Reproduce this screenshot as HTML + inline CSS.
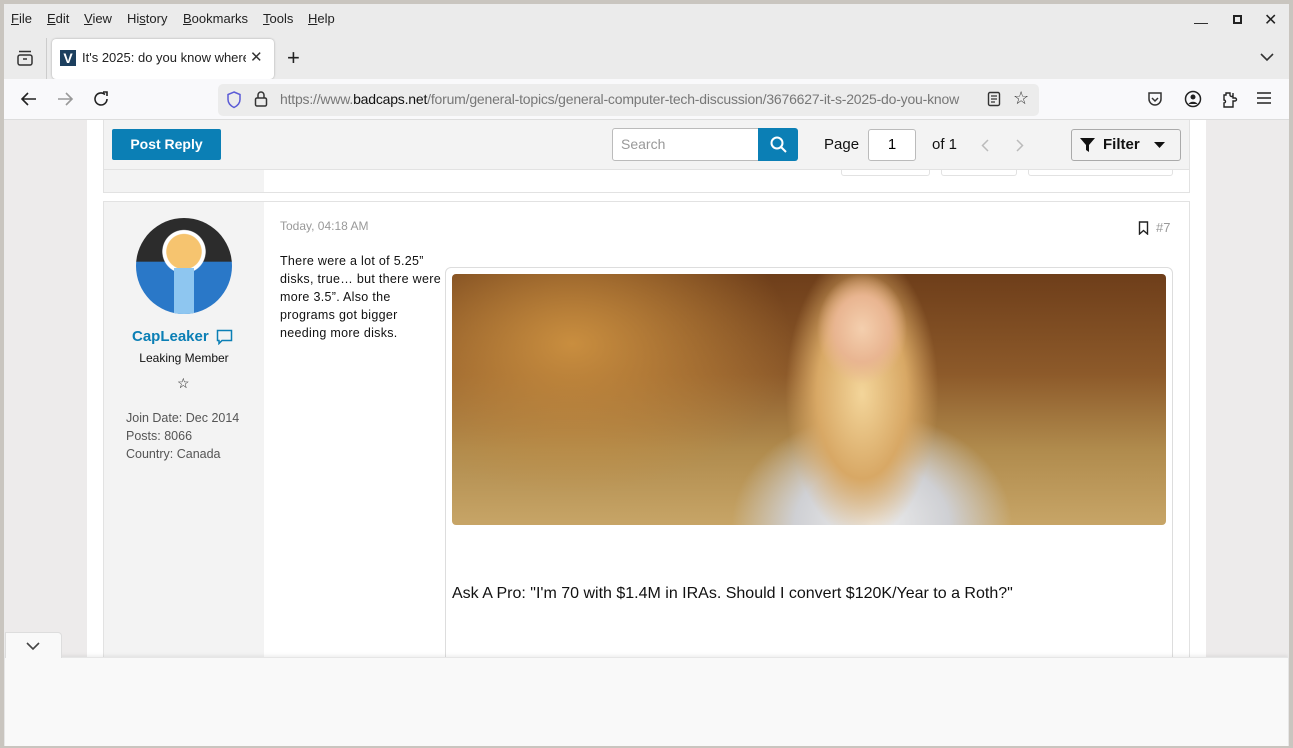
<!DOCTYPE html><html><head><style>
*{box-sizing:border-box;margin:0;padding:0}
body{width:1293px;height:748px;overflow:hidden;background:#c9c5bf;font-family:"Liberation Sans",sans-serif;position:relative}
.win{position:absolute;left:4px;top:4px;width:1285px;height:742px;background:#ebebeb;overflow:hidden}
.abs{position:absolute}
.menu span{position:absolute;top:7px;font-size:13px;color:#222}
</style></head><body>
<div class="win">
 <div class="menu">
  <span style="left:7px"><u>F</u>ile</span><span style="left:43px"><u>E</u>dit</span><span style="left:80px"><u>V</u>iew</span><span style="left:123px">Hi<u>s</u>tory</span><span style="left:179px"><u>B</u>ookmarks</span><span style="left:259px"><u>T</u>ools</span><span style="left:304px"><u>H</u>elp</span>
 </div>
 <div class="abs" style="left:1190px;top:10px;font-size:14px;color:#222">&#8212;</div>
 <div class="abs" style="left:1229px;top:11px;width:9px;height:9px;border:2px solid #222"></div>
 <div class="abs" style="left:1260px;top:6px;font-size:16px;color:#222">✕</div>
 <svg class="abs" style="left:12px;top:45px" width="18" height="18"><rect x="2" y="6" width="14" height="10" rx="2" fill="none" stroke="#333" stroke-width="1.5"/><line x1="3" y1="2.5" x2="15" y2="2.5" stroke="#333" stroke-width="1.5"/><line x1="7" y1="10" x2="11" y2="10" stroke="#333" stroke-width="1.5"/></svg>
 <div class="abs" style="left:42px;top:34px;width:1px;height:42px;background:#ccc"></div>
 <div class="abs" style="left:48px;top:35px;width:222px;height:40px;background:#fff;border-radius:4px;box-shadow:0 0 2px rgba(0,0,0,.3)"></div>
 <div class="abs" style="left:56px;top:46px;width:16px;height:16px;background:#1c3f5e;color:#fff;font-size:14px;font-weight:bold;line-height:16px;text-align:center">V</div>
 <div class="abs" style="left:78px;top:46px;font-size:13px;color:#222;width:164px;overflow:hidden;white-space:nowrap">It's 2025: do you know where</div>
 <div class="abs" style="left:246px;top:44px;font-size:15px;color:#333">✕</div>
 <div class="abs" style="left:283px;top:41px;font-size:22px;color:#222">+</div>
 <svg class="abs" style="left:1256px;top:48px" width="14" height="10"><path d="M1 2l6 6 6-6" fill="none" stroke="#333" stroke-width="1.6"/></svg>
 <div class="abs" style="left:0;top:75px;width:1285px;height:41px;background:#f9f9fb;border-bottom:1px solid #ddd"></div>
 <svg class="abs" style="left:16px;top:87px" width="18" height="16"><path d="M16 8H2M8 2L2 8l6 6" fill="none" stroke="#222" stroke-width="1.6"/></svg>
 <svg class="abs" style="left:52px;top:87px" width="18" height="16"><path d="M2 8h14M10 2l6 6-6 6" fill="none" stroke="#999" stroke-width="1.6"/></svg>
 <svg class="abs" style="left:89px;top:86px" width="18" height="18"><path d="M14 9a6 6 0 1 1-2-4.5" fill="none" stroke="#222" stroke-width="1.6"/><path d="M10 2h4v4" fill="none" stroke="#222" stroke-width="1.6"/></svg>
 <div class="abs" style="left:214px;top:80px;width:821px;height:32px;background:#ececec;border-radius:5px"></div>
 <svg class="abs" style="left:222px;top:87px" width="16" height="18"><path d="M8 1l6 2.5v5c0 4-3 6.5-6 8-3-1.5-6-4-6-8v-5z" fill="none" stroke="#5b5bd6" stroke-width="1.5"/></svg>
 <svg class="abs" style="left:250px;top:86px" width="14" height="18"><rect x="1.5" y="8" width="11" height="8" rx="1.5" fill="none" stroke="#333" stroke-width="1.5"/><path d="M4 8V5a3 3 0 0 1 6 0v3" fill="none" stroke="#333" stroke-width="1.5"/></svg>
 <div class="abs" style="left:276px;top:87px;font-size:14px;color:#777;width:700px;overflow:hidden;white-space:nowrap;letter-spacing:-0.2px">https://www.<span style="color:#111">badcaps.net</span>/forum/general-topics/general-computer-tech-discussion/3676627-it-s-2025-do-you-know</div>
 <svg class="abs" style="left:983px;top:87px" width="14" height="16"><rect x="1.5" y="1.5" width="11" height="13" rx="1.5" fill="none" stroke="#333" stroke-width="1.4"/><path d="M4 5h6M4 8h6M4 11h4" stroke="#333" stroke-width="1.2"/></svg>
 <div class="abs" style="left:1009px;top:84px;font-size:18px;color:#333">☆</div>
 <svg class="abs" style="left:1143px;top:87px" width="16" height="16"><path d="M2 2h12v6a6 6 0 0 1-12 0z" fill="none" stroke="#333" stroke-width="1.5"/><path d="M5 7l3 3 3-3" fill="none" stroke="#333" stroke-width="1.5"/></svg>
 <svg class="abs" style="left:1180px;top:86px" width="18" height="18"><circle cx="9" cy="9" r="7.5" fill="none" stroke="#222" stroke-width="1.5"/><circle cx="9" cy="7" r="2.5" fill="#222"/><path d="M4.5 14a5 4 0 0 1 9 0" fill="#222"/></svg>
 <svg class="abs" style="left:1216px;top:86px" width="18" height="18"><path d="M6 3h4v2a1.5 1.5 0 0 0 3 0V3h0v5h2a1.5 1.5 0 0 1 0 3h-2v6H4v-4a1.5 1.5 0 0 0 0-3V5h2z" fill="none" stroke="#222" stroke-width="1.4"/></svg>
 <svg class="abs" style="left:1253px;top:88px" width="14" height="12"><path d="M0 1h14M0 6h14M0 11h14" stroke="#222" stroke-width="1.5"/></svg>
 <div class="abs" style="left:1px;top:116px;width:1283px;height:537px;background:#edebeb;overflow:hidden">
  <div class="abs" style="left:82px;top:0;width:1119px;height:537px;background:#fff"></div>
  <div class="abs" style="left:98px;top:0;width:1087px;height:73px;border:1px solid #e2e2e2;border-top:none;background:#fff"></div>
  <div class="abs" style="left:99px;top:49px;width:160px;height:23px;background:#f3f3f3"></div>
  <div class="abs" style="left:99px;top:0;width:1085px;height:50px;background:#f3f3f3;border-bottom:1px solid #e2e2e2"></div>
  <div class="abs" style="left:836px;top:50px;width:89px;height:6px;border:1px solid #e2e2e2;border-top:none;border-radius:0 0 3px 3px"></div>
  <div class="abs" style="left:936px;top:50px;width:76px;height:6px;border:1px solid #e2e2e2;border-top:none;border-radius:0 0 3px 3px"></div>
  <div class="abs" style="left:1023px;top:50px;width:145px;height:6px;border:1px solid #e2e2e2;border-top:none;border-radius:0 0 3px 3px"></div>
  <div class="abs" style="left:107px;top:9px;width:109px;height:31px;background:#0b7fb5;border-radius:2px;color:#fff;font-weight:bold;font-size:14px;line-height:31px;text-align:center">Post Reply</div>
  <div class="abs" style="left:607px;top:8px;width:147px;height:33px;border:1px solid #bbb;border-radius:3px 0 0 3px;background:#fff;color:#999;font-size:14px;line-height:31px;padding-left:8px">Search</div>
  <div class="abs" style="left:753px;top:8px;width:40px;height:33px;background:#0b7fb5;border-radius:0 3px 3px 0"></div>
  <svg class="abs" style="left:765px;top:16px" width="17" height="17"><circle cx="7" cy="7" r="5.5" fill="none" stroke="#fff" stroke-width="2"/><path d="M11 11l5 5" stroke="#fff" stroke-width="2"/></svg>
  <div class="abs" style="left:819px;top:16px;font-size:15px;color:#111">Page</div>
  <div class="abs" style="left:863px;top:9px;width:48px;height:32px;border:1px solid #bbb;border-radius:3px;background:#fff;text-align:center;line-height:30px;font-size:15px">1</div>
  <div class="abs" style="left:927px;top:16px;font-size:15px;color:#111">of 1</div>
  <svg class="abs" style="left:976px;top:19px" width="8" height="13"><path d="M7 1L1.5 6.5 7 12" fill="none" stroke="#bbb" stroke-width="1.5"/></svg>
  <svg class="abs" style="left:1011px;top:19px" width="8" height="13"><path d="M1 1l5.5 5.5L1 12" fill="none" stroke="#bbb" stroke-width="1.5"/></svg>
  <div class="abs" style="left:1066px;top:9px;width:110px;height:32px;border:1px solid #aaa;border-radius:3px;background:#f3f3f3"></div>
  <svg class="abs" style="left:1075px;top:18px" width="15" height="14"><path d="M0 0h15L9 7v7L6 12V7z" fill="#111"/></svg>
  <div class="abs" style="left:1098px;top:16px;font-size:15px;font-weight:bold;color:#111">Filter</div>
  <svg class="abs" style="left:1149px;top:22px" width="11" height="6"><path d="M0 0h11L5.5 6z" fill="#111"/></svg>
  <div class="abs" style="left:98px;top:81px;width:1087px;height:470px;border:1px solid #e2e2e2"></div>
  <div class="abs" style="left:99px;top:82px;width:160px;height:460px;background:#f3f3f3"></div>
  <div class="abs" style="left:131px;top:98px;width:96px;height:96px;border-radius:50%;background:radial-gradient(circle at 50% 35%,#f6c46f 0 22%,#fff 23% 27%,transparent 28%),linear-gradient(#2c2c2c 45%,#2a78c8 46%);overflow:hidden"><div style="position:absolute;left:38px;top:50px;width:20px;height:46px;background:#8ec6f0"></div></div>
  <div class="abs" style="left:127px;top:208px;font-size:15px;font-weight:bold;color:#0b7fb5">CapLeaker</div>
  <svg class="abs" style="left:211px;top:209px" width="17" height="16"><path d="M1.5 1.5h14v10H6l-3 3v-3H1.5z" fill="none" stroke="#0b7fb5" stroke-width="1.5"/></svg>
  <div class="abs" style="left:99px;top:231px;width:160px;text-align:center;font-size:12px;color:#111">Leaking Member</div>
  <div class="abs" style="left:172px;top:255px;font-size:14px;color:#111">☆</div>
  <div class="abs" style="left:121px;top:289px;font-size:12.5px;color:#555;line-height:18px">Join Date: Dec 2014<br>Posts: 8066<br>Country: Canada</div>
  <div class="abs" style="left:275px;top:99px;font-size:12px;color:#999">Today, 04:18 AM</div>
  <svg class="abs" style="left:1133px;top:101px" width="11" height="14"><path d="M1.5 1h8v12L5.5 9.5 1.5 13z" fill="none" stroke="#222" stroke-width="1.4"/></svg>
  <div class="abs" style="left:1151px;top:100px;font-size:13px;color:#999">#7</div>
  <div class="abs" style="left:275px;top:132px;font-size:12.5px;letter-spacing:0.3px;color:#111;line-height:18px;width:164px">There were a lot of 5.25” disks, true… but there were more 3.5”. Also the programs got bigger needing more disks.</div>
  <div class="abs" style="left:440px;top:147px;width:728px;height:420px;border:1px solid #ddd;border-radius:6px"></div>
  <div class="abs" style="left:447px;top:154px;width:714px;height:251px;border-radius:4px;background:
   radial-gradient(ellipse 45px 55px at 410px 55px,#f4cfae 0,#e9b591 60%,transparent 100%),
   radial-gradient(ellipse 90px 170px at 410px 120px,#f3d59a 0,#d8a865 50%,transparent 85%),
   radial-gradient(ellipse 140px 110px at 420px 250px,#eeeeee 0,#cfd0d4 55%,transparent 100%),
   radial-gradient(ellipse 220px 150px at 120px 70px,#c98e3f,transparent),
   linear-gradient(180deg,#6e3e1a 0%,#8d5a2a 40%,#b08b4d 70%,#c7a567 100%)"></div>
  <div class="abs" style="left:447px;top:465px;font-size:16px;color:#111">Ask A Pro: "I'm 70 with $1.4M in IRAs. Should I convert $120K/Year to a Roth?"</div>
 </div>
 <div class="abs" style="left:1px;top:653px;width:1283px;height:90px;background:#f9f9f9;border-top:1px solid #e6e6e6;box-shadow:0 -2px 3px rgba(0,0,0,.06)"></div>
 <div class="abs" style="left:1px;top:628px;width:57px;height:26px;background:#f9f9f9;border:1px solid #ddd;border-bottom:none;border-radius:0 4px 0 0"></div>
 <svg class="abs" style="left:22px;top:638px" width="14" height="9"><path d="M1 1l6 6 6-6" fill="none" stroke="#444" stroke-width="1.6"/></svg>
</div>
</body></html>
